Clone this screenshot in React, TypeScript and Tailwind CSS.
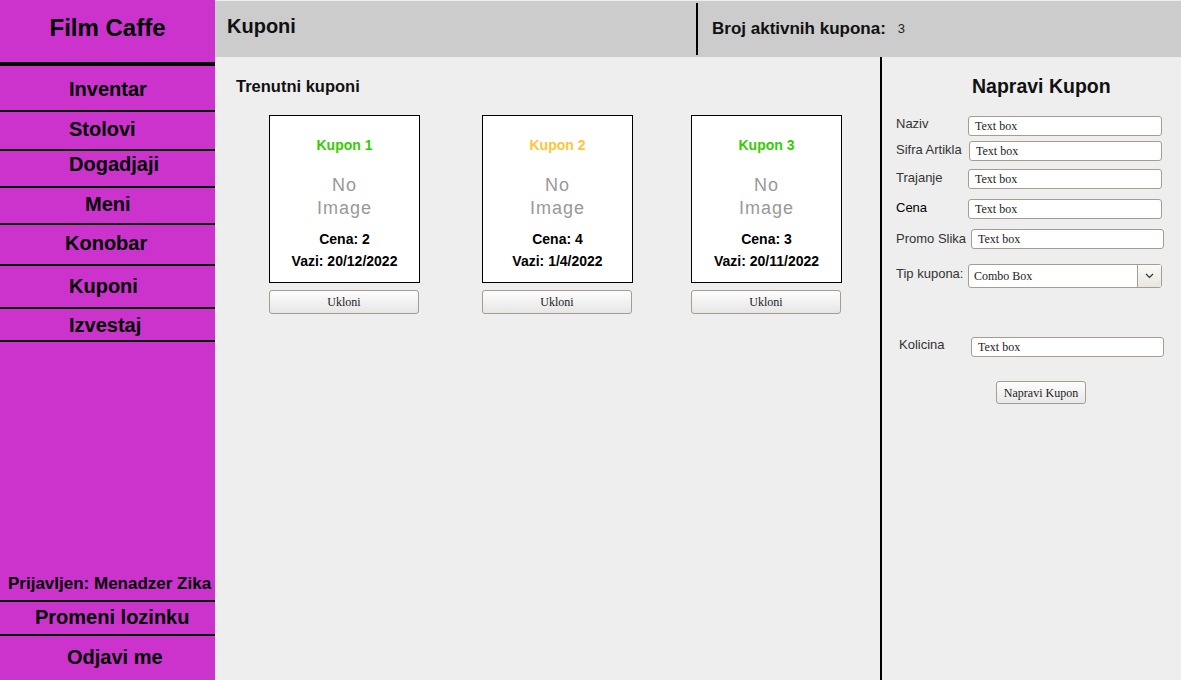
import React from 'react'

const navItems = [
  { label: 'Inventar', h: 'h-[46px]', pt: 'pt-[11px]', pl: 'pl-[69px]' },
  { label: 'Stolovi', h: 'h-[39px]', pt: 'pt-[5px]', pl: 'pl-[69px]' },
  { label: 'Dogadjaji', h: 'h-[37px]', pt: 'pt-[1px]', pl: 'pl-[69px]' },
  { label: 'Meni', h: 'h-[37px]', pt: 'pt-[4px]', pl: 'pl-[85px]' },
  { label: 'Konobar', h: 'h-[41px]', pt: 'pt-[6px]', pl: 'pl-[65px]' },
  { label: 'Kuponi', h: 'h-[43px]', pt: 'pt-[8px]', pl: 'pl-[69px]' },
  { label: 'Izvestaj', h: 'h-[33px]', pt: 'pt-[4px]', pl: 'pl-[69px]' },
]

const coupons = [
  { name: 'Kupon 1', color: 'text-[#33cc00]', price: 2, valid: '20/12/2022', ml: 'ml-0' },
  { name: 'Kupon 2', color: 'text-[#ffc533]', price: 4, valid: '1/4/2022', ml: 'ml-[62px]' },
  { name: 'Kupon 3', color: 'text-[#33cc00]', price: 3, valid: '20/11/2022', ml: 'ml-[58px]' },
]

const TextBox = ({ width }: { width: string }) => (
  <div className={`${width} h-[20px] bg-white border border-[#a89c8e] rounded-[3px] pl-[6px] flex items-center text-[12px] text-[#222] font-['Liberation_Serif',serif]`}>
    Text box
  </div>
)

const Sidebar = () => (
  <div className="w-[215px] shrink-0 h-full bg-[#cc33cc] flex flex-col text-black font-bold">
    <div className="h-[66px] shrink-0 border-b-4 border-black pt-[14px] text-center text-[24px] leading-[28px]">Film Caffe</div>
    {navItems.map((n) => (
      <div key={n.label} className={`${n.h} ${n.pt} ${n.pl} shrink-0 border-b-2 border-black text-[20px] leading-[24px]`}>
        {n.label}
      </div>
    ))}
    <div className="flex-1" />
    <div className="h-[32px] shrink-0 border-b-2 border-black pt-[4px] pl-[8px] text-[17px] leading-[20px] whitespace-nowrap">Prijavljen: Menadzer Zika</div>
    <div className="h-[34px] shrink-0 border-b-2 border-black pt-[3px] pl-[35px] text-[20px] leading-[24px]">Promeni lozinku</div>
    <div className="h-[44px] shrink-0 pt-[9px] pl-[67px] text-[20px] leading-[24px]">Odjavi me</div>
  </div>
)

const CouponCard = ({ c }: { c: (typeof coupons)[number] }) => (
  <div className={`${c.ml} w-[151px] flex flex-col`}>
    <div className="h-[168px] bg-white border border-black flex flex-col items-center pt-[20px]">
      <div className={`${c.color} font-bold text-[14px] leading-[18px]`}>{c.name}</div>
      <div className="mt-[20px] text-[#999] text-[18px] leading-[23px] tracking-[1px] text-center">
        No
        <br />
        Image
      </div>
      <div className="mt-[8px] font-bold text-[14px] leading-[22px] text-black">Cena: {c.price}</div>
      <div className="font-bold text-[14px] leading-[22px] text-black whitespace-nowrap">Vazi: {c.valid}</div>
    </div>
    <button className="mt-[7px] w-[150px] h-[24px] border border-[#a89c8e] rounded-[3px] bg-gradient-to-b from-[#fdfdfd] to-[#e6e6e6] text-[12px] text-[#222] font-['Liberation_Serif',serif]">
      Ukloni
    </button>
  </div>
)

const CreatePanel = () => (
  <div className="flex-1 flex flex-col text-[13px] text-[#333]">
    <div className="pt-[17px] pl-[90px] text-[19.5px] leading-[24px] font-bold text-[#111] whitespace-nowrap">Napravi Kupon</div>

    <div className="mt-[18px] flex items-start pl-[14px]">
      <div className="w-[72px] leading-[16px]">Naziv</div>
      <TextBox width="w-[194px]" />
    </div>
    <div className="mt-[5px] flex items-start pl-[14px]">
      <div className="w-[73px] pt-[1px] leading-[16px] whitespace-nowrap">Sifra Artikla</div>
      <TextBox width="w-[193px]" />
    </div>
    <div className="mt-[8px] flex items-start pl-[14px]">
      <div className="w-[72px] pt-[1px] leading-[16px]">Trajanje</div>
      <TextBox width="w-[194px]" />
    </div>
    <div className="mt-[10px] flex items-start pl-[14px]">
      <div className="w-[72px] pt-[1px] leading-[16px] text-black">Cena</div>
      <TextBox width="w-[194px]" />
    </div>
    <div className="mt-[10px] flex items-start pl-[14px]">
      <div className="w-[75px] pt-[2px] leading-[16px] whitespace-nowrap">Promo Slika</div>
      <TextBox width="w-[193px]" />
    </div>
    <div className="mt-[15px] flex items-start pl-[14px]">
      <div className="w-[72px] pt-[2px] leading-[16px] whitespace-nowrap">Tip kupona:</div>
      <div className="w-[194px] h-[24px] bg-white border border-[#a89c8e] rounded-[3px] flex font-['Liberation_Serif',serif] text-[12px] text-[#222]">
        <div className="flex-1 flex items-center pl-[5px]">Combo Box</div>
        <div className="w-[24px] border-l border-[#a89c8e] bg-gradient-to-b from-[#fafafa] to-[#e8e6e0] flex items-center justify-center">
          <svg width="9" height="6" viewBox="0 0 9 6" fill="none">
            <path d="M1 1 L4.5 4.5 L8 1" stroke="#333" strokeWidth="1.2" />
          </svg>
        </div>
      </div>
    </div>
    <div className="mt-[49px] flex items-start pl-[17px]">
      <div className="w-[72px] leading-[16px]">Kolicina</div>
      <TextBox width="w-[193px]" />
    </div>
    <div className="mt-[24px] pl-[114px]">
      <button className="w-[90px] h-[23px] border border-[#a89c8e] rounded-[3px] bg-gradient-to-b from-[#fdfdfd] to-[#e8e8e8] text-[12px] text-[#222] font-['Liberation_Serif',serif] whitespace-nowrap">
        Napravi Kupon
      </button>
    </div>
  </div>
)

const App: React.FC = () => {
  return (
    <div className="w-[1181px] h-[680px] flex bg-[#eeeeee] overflow-hidden font-['Liberation_Sans',Arial,sans-serif]">
      <Sidebar />
      <div className="flex-1 flex flex-col min-w-0">
        {/* Header */}
        <div className="h-[57px] shrink-0 border-t border-[#eeeeee] bg-[#cccccc] flex">
          <div className="w-[481px] pl-[12px] pt-[13px] text-[20px] leading-[24px] font-bold text-[#111]">Kuponi</div>
          <div className="w-[2px] h-[52px] self-center bg-black" />
          <div className="pl-[14px] flex items-center">
            <span className="font-bold text-[17px] text-[#111]">Broj aktivnih kupona:</span>
            <span className="ml-[12px] text-[13px] text-[#222]">3</span>
          </div>
        </div>

        <div className="flex-1 flex">
          {/* Current coupons */}
          <div className="w-[667px] shrink-0 border-r-2 border-black flex flex-col">
            <div className="pt-[19px] pl-[21px] text-[16.5px] leading-[20px] font-bold text-[#111]">Trenutni kuponi</div>
            <div className="mt-[19px] pl-[54px] flex">
              {coupons.map((c) => (
                <CouponCard key={c.name} c={c} />
              ))}
            </div>
          </div>
          <CreatePanel />
        </div>
      </div>
    </div>
  )
}

export default App
